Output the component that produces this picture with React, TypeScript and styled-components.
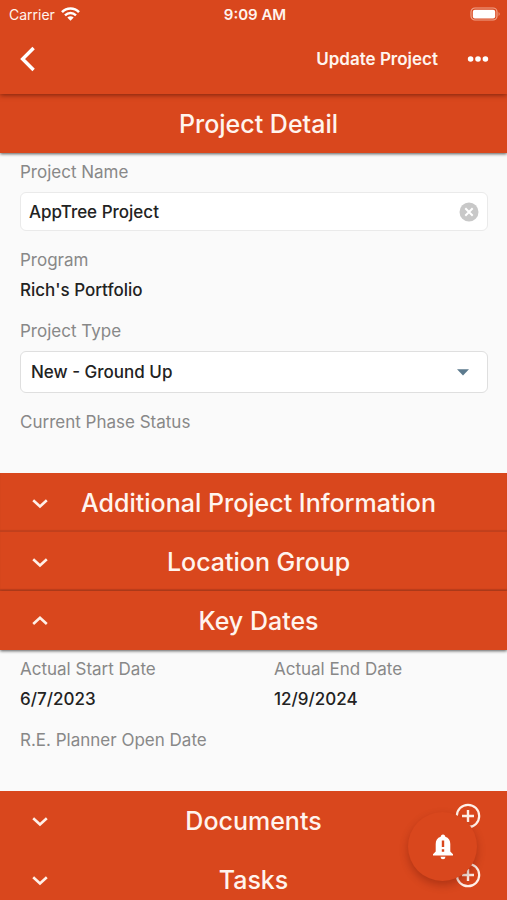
import React, { useState } from "react";
import styled, { createGlobalStyle, css } from "styled-components";

const GlobalStyle = createGlobalStyle`
  * { box-sizing: border-box; }
  body {
    margin: 0;
    background: #fafafa;
    color: #222;
    font-family: Inter, Roboto, sans-serif;
  }
  button, input, select { font: inherit; color: inherit; }
`;

const brand = "#d9471d";

const Screen = styled.div`
  display: flex;
  flex-direction: column;
`;

const TopBar = styled.header`
  position: relative;
  z-index: 1;
  background: ${brand};
  color: #fff4ee;
  box-shadow: 0 1px 5px rgba(60, 10, 0, 0.6);
`;

const StatusBar = styled.div`
  display: grid;
  grid-template-columns: 1fr auto 1fr;
  align-items: center;
  height: 28px;
  padding: 0 6px 0 9px;
  font-size: 14px;
`;

const Carrier = styled.span`
  display: flex;
  align-items: center;
  gap: 6px;
`;

const Clock = styled.time`
  font-size: 15px;
  font-weight: 600;
`;

const Battery = styled.svg`
  justify-self: end;
`;

const NavBar = styled.nav`
  display: flex;
  align-items: center;
  height: 66px;
  padding: 0 13px 4px 12px;
`;

const BarButton = styled.button`
  display: flex;
  align-items: center;
  justify-content: center;
  min-width: 32px;
  height: 40px;
  padding: 0;
  border: 0;
  background: none;
  font-size: 17px;
  font-weight: 600;
  cursor: pointer;
`;

const NavActions = styled.div`
  display: flex;
  gap: 24px;
  margin-left: auto;
`;

const SectionHeader = styled.div<{ $open: boolean; $divided?: boolean; $addable?: boolean }>`
  position: relative;
  display: grid;
  grid-template-columns: 72px 1fr ${(p) => (p.$addable ? 72 : 62)}px;
  align-items: center;
  height: 59px;
  background: ${brand};
  color: #fff4ee;
  ${(p) =>
    p.$divided &&
    css`
      box-shadow: inset 0 -2px 1px #c0401d;
    `}
  ${(p) =>
    p.$open &&
    css`
      box-shadow: 0 1px 3px rgba(0, 0, 0, 0.65);
    `}
`;

const SectionTitle = styled.h2`
  grid-column: 2;
  margin: 0;
  font-size: 25px;
  line-height: 32px;
  font-weight: 500;
  text-align: center;
  white-space: nowrap;
`;

const Toggle = styled.button`
  grid-column: 1;
  display: flex;
  justify-content: flex-end;
  padding: 12px 20px 12px 0;
  border: 0;
  background: none;
  cursor: pointer;
`;

const AddButton = styled.button`
  grid-column: 3;
  justify-self: end;
  display: flex;
  padding: 0 26px 10px 0;
  border: 0;
  background: none;
  cursor: pointer;
`;

const SectionBody = styled.div`
  display: grid;
  grid-template-columns: 1fr 1fr;
  column-gap: 40px;
  padding: 8px 19px 0 20px;
`;

const Field = styled.div<{ $wide?: boolean; $height: number }>`
  display: flex;
  flex-direction: column;
  min-height: ${(p) => p.$height}px;
  grid-column: ${(p) => (p.$wide ? "1 / -1" : "auto")};
`;

const labelText = css`
  font-size: 17px;
  line-height: 22px;
  color: #888;
  white-space: nowrap;
`;

const Label = styled.label`
  ${labelText}
`;

const Caption = styled.span`
  ${labelText}
`;

const Value = styled.span`
  margin-top: 8px;
  font-size: 17px;
  line-height: 22px;
  font-weight: 500;
`;

const InputBox = styled.div`
  display: flex;
  align-items: center;
  height: 39px;
  margin-top: 9px;
  padding: 0 8px;
  border: 1px solid #eaeaea;
  border-radius: 6px;
  background: #fff;
`;

const TextInput = styled.input`
  flex: 1;
  min-width: 0;
  padding: 0;
  border: 0;
  outline: 0;
  background: none;
  font-size: 17px;
  font-weight: 500;
`;

const ClearButton = styled.button`
  display: flex;
  padding: 0;
  border: 0;
  background: none;
  cursor: pointer;
`;

const SelectBox = styled.div`
  display: grid;
  align-items: center;
  height: 42px;
  margin-top: 9px;
  border: 1px solid #dfdfdf;
  border-radius: 6px;
  background: #fff;

  > * { grid-area: 1 / 1; }
  > svg {
    justify-self: end;
    margin-right: 18px;
    pointer-events: none;
  }
`;

const Select = styled.select`
  appearance: none;
  width: 100%;
  height: 100%;
  padding: 0 40px 0 10px;
  border: 0;
  background: none;
  font-size: 17px;
  font-weight: 500;
`;

const AlertButton = styled.button`
  position: fixed;
  right: 30px;
  bottom: 19px;
  z-index: 2;
  display: flex;
  align-items: center;
  justify-content: center;
  width: 69px;
  height: 69px;
  padding: 0;
  border: 0;
  border-radius: 50%;
  background: ${brand};
  box-shadow: 0 4px 8px rgba(80, 10, 0, 0.3);
  cursor: pointer;
`;

const WifiIcon = () => (
  <svg width="19" height="14" viewBox="0 0 19 14" fill="none" stroke="#fff" aria-hidden="true">
    <path d="M1 5.2 C5.8 .3 13.2 .3 18 5.2" strokeWidth="2.6" />
    <path d="M4 8.3 C7.2 5.2 11.8 5.2 15 8.3" strokeWidth="2.4" />
    <path d="M9.5 13.8 L6.3 10.6 Q9.5 8 12.7 10.6 Z" fill="#fff" stroke="none" />
  </svg>
);

const BatteryIcon = () => (
  <Battery width="31" height="15" viewBox="0 0 31 15" role="img" aria-label="Battery full">
    <rect x="1" y="1" width="26" height="12" rx="4" fill="none" stroke="#f0a48c" strokeWidth="1.2" />
    <rect x="2.8" y="2.8" width="22.4" height="8.6" rx="2" fill="#fff" />
    <path d="M28.6 5 q2 2 0 4 z" fill="#f0a48c" />
  </Battery>
);

const Chevron = ({ up }: { up: boolean }) => (
  <svg width="24" height="24" viewBox="0 0 24 24" fill="none" stroke="#fff0e8" strokeWidth="2.6" aria-hidden="true">
    <path d={up ? "M5.2 15 L12 8.7 L18.8 15" : "M5.2 9.2 L12 15.5 L18.8 9.2"} />
  </svg>
);

const AddIcon = () => (
  <svg width="26" height="26" viewBox="0 0 26 26" fill="none" stroke="#fff0e8" strokeWidth="2.2" aria-hidden="true">
    <circle cx="13" cy="13" r="11.2" />
    <path d="M13 7 V19 M7 13 H19" strokeWidth="2.4" />
  </svg>
);

interface HeaderProps {
  title: string;
  open: boolean;
  divided?: boolean;
  addable?: boolean;
  onToggle?: () => void;
}

const Header = ({ title, open, divided, addable, onToggle }: HeaderProps) => (
  <SectionHeader $open={open} $divided={divided} $addable={addable}>
    {onToggle && (
      <Toggle type="button" aria-label={title} aria-expanded={open} onClick={onToggle}>
        <Chevron up={open} />
      </Toggle>
    )}
    <SectionTitle>{title}</SectionTitle>
    {addable && (
      <AddButton type="button" aria-label={`Add ${title}`}>
        <AddIcon />
      </AddButton>
    )}
  </SectionHeader>
);

export default function App() {
  const [name, setName] = useState("AppTree Project");
  const [open, setOpen] = useState<Record<string, boolean>>({ dates: true });
  const toggle = (key: string) => () => setOpen((o) => ({ ...o, [key]: !o[key] }));

  return (
    <Screen>
      <GlobalStyle />
      <TopBar>
        <StatusBar>
          <Carrier>
            Carrier <WifiIcon />
          </Carrier>
          <Clock>9:09 AM</Clock>
          <BatteryIcon />
        </StatusBar>
        <NavBar>
          <BarButton type="button" aria-label="Back">
            <svg width="26" height="26" viewBox="0 0 26 26" fill="none" stroke="#fff" strokeWidth="3.4">
              <path d="M18.6 2 L7.6 13 L18.6 24" />
            </svg>
          </BarButton>
          <NavActions>
            <BarButton type="button">Update Project</BarButton>
            <BarButton type="button" aria-label="More">
              <svg width="22" height="8" viewBox="0 0 22 8" fill="#fff">
                <circle cx="3.6" cy="4" r="2.8" />
                <circle cx="11" cy="4" r="2.8" />
                <circle cx="18.4" cy="4" r="2.8" />
              </svg>
            </BarButton>
          </NavActions>
        </NavBar>
      </TopBar>

      <main>
        <section>
          <Header title="Project Detail" open />
          <SectionBody>
            <Field $wide $height={88}>
              <Label htmlFor="name">Project Name</Label>
              <InputBox>
                <TextInput id="name" value={name} onChange={(e) => setName(e.target.value)} />
                <ClearButton type="button" aria-label="Clear project name" onClick={() => setName("")}>
                  <svg width="20" height="20" viewBox="0 0 20 20">
                    <circle cx="10" cy="10" r="9.5" fill="#c8c8c8" />
                    <path d="M6.3 6.3 L13.7 13.7 M13.7 6.3 L6.3 13.7" stroke="#fff" strokeWidth="2" />
                  </svg>
                </ClearButton>
              </InputBox>
            </Field>
            <Field $height={71}>
              <Caption>Program</Caption>
              <Value>Rich's Portfolio</Value>
            </Field>
            <Field $wide $height={91}>
              <Label htmlFor="type">Project Type</Label>
              <SelectBox>
                <Select id="type" defaultValue="New - Ground Up">
                  <option>New - Ground Up</option>
                </Select>
                <svg width="12" height="7" viewBox="0 0 12 7" aria-hidden="true">
                  <path d="M0 .3 H12 L6 6.5 Z" fill="#5c7a8e" />
                </svg>
              </SelectBox>
            </Field>
            <Field $height={62}>
              <Caption>Current Phase Status</Caption>
            </Field>
          </SectionBody>
        </section>

        <Header title="Additional Project Information" divided open={!!open.info} onToggle={toggle("info")} />
        <Header title="Location Group" divided open={!!open.location} onToggle={toggle("location")} />
        <section>
          <Header title="Key Dates" open={!!open.dates} onToggle={toggle("dates")} />
          {open.dates && (
            <SectionBody>
              <Field $height={71}>
                <Caption>Actual Start Date</Caption>
                <Value>6/7/2023</Value>
              </Field>
              <Field $height={71}>
                <Caption>Actual End Date</Caption>
                <Value>12/9/2024</Value>
              </Field>
              <Field $height={62}>
                <Caption>R.E. Planner Open Date</Caption>
              </Field>
            </SectionBody>
          )}
        </section>
        <Header title="Documents" addable open={!!open.documents} onToggle={toggle("documents")} />
        <Header title="Tasks" addable open={!!open.tasks} onToggle={toggle("tasks")} />
      </main>

      <AlertButton type="button" aria-label="Alerts">
        <svg width="22" height="26" viewBox="0 0 22 26" fill="#fff">
          <path d="M11 .5 C12.4 .5 13.3 1.5 13.3 2.8 C16.8 3.8 18.3 6.6 18.3 10 V17.5 L21 20.3 V21.5 H1 V20.3 L3.7 17.5 V10 C3.7 6.6 5.2 3.8 8.7 2.8 C8.7 1.5 9.6 .5 11 .5 Z" />
          <path d="M8.5 22.7 H13.5 Q13.2 25.2 11 25.2 Q8.8 25.2 8.5 22.7 Z" />
          <path d="M11 6.5 V13 M11 15.2 V17.8" stroke={brand} strokeWidth="2.4" />
        </svg>
      </AlertButton>
    </Screen>
  );
}
